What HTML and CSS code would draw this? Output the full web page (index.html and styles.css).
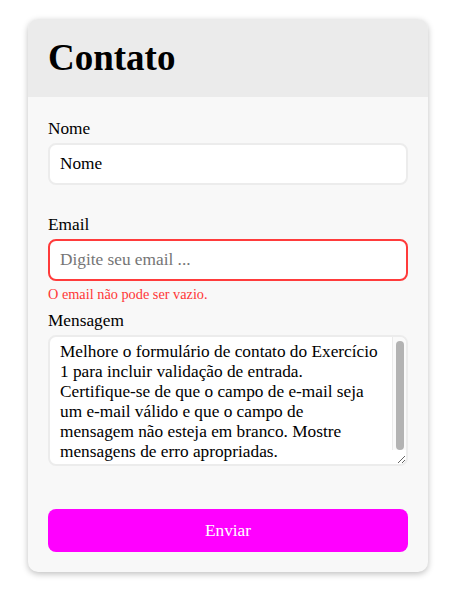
FILE: index.html
```html
<!DOCTYPE html>
<html lang="pt">
<head>
<meta charset="utf-8">
<title>Contato</title>
<link rel="stylesheet" href="styles.css">
</head>
<body>
<div class="page">
  <form class="card" novalidate>
    <header class="card-header">
      <h1 class="title">Contato</h1>
    </header>
    <div class="card-body">
      <div class="field">
        <label class="label" for="nome">Nome</label>
        <input class="input" id="nome" type="text" value="Nome">
        <span class="error"></span>
      </div>
      <div class="field">
        <label class="label" for="email">Email</label>
        <input class="input input-invalid" id="email" type="email" placeholder="Digite seu email ...">
        <span class="error">O email não pode ser vazio.</span>
      </div>
      <div class="field">
        <label class="label" for="mensagem">Mensagem</label>
        <div class="textarea-wrap">
          <textarea class="input textarea" id="mensagem">Melhore o formulário de contato do Exercício 1 para incluir validação de entrada. Certifique-se de que o campo de e-mail seja um e-mail válido e que o campo de mensagem não esteja em branco. Mostre mensagens de erro apropriadas.</textarea>
          <div class="scrollbar" aria-hidden="true"><div class="scrollbar-thumb"></div></div>
        </div>
        <span class="error"></span>
      </div>
      <button class="button" type="button">Enviar</button>
    </div>
  </form>
</div>
</body>
</html>
```
FILE: styles.css
```css
html, body {
  margin: 0;
  padding: 0;
  background: #ffffff;
}

body {
  font-family: "Liberation Serif", "DejaVu Serif", serif;
  color: #000;
}

.page {
  padding: 19px 22px 24px 28px;
}

.card {
  width: 400px;
  background: #f8f8f8;
  border-radius: 10px;
  box-shadow: 0 2px 6px rgba(0, 0, 0, 0.25);
  overflow: hidden;
}

.card-header {
  background: #ebebeb;
  padding: 20px;
}

.title {
  margin: 0;
  font-size: 37px;
  line-height: 38px;
  font-weight: bold;
}

.card-body {
  padding: 23px 20px 20px;
  display: flex;
  flex-direction: column;
}

.field {
  display: flex;
  flex-direction: column;
  margin-bottom: 10px;
}

.label {
  font-size: 17.3px;
  line-height: 18px;
  margin-bottom: 5px;
}

.input {
  box-sizing: border-box;
  width: 100%;
  height: 42px;
  margin: 0;
  padding: 0 10px;
  border: 2px solid #ececec;
  border-radius: 8px;
  background: #fff;
  font-family: inherit;
  font-size: 17.3px;
  color: #000;
  outline: none;
}

.input::placeholder {
  color: #757575;
}

.input-invalid {
  border-color: #ff3b3b;
}

.textarea-wrap {
  position: relative;
}

.textarea {
  display: block;
  height: 131px;
  padding: 5px 25px 6px 10px;
  line-height: 20px;
  overflow: hidden;
  resize: both;
}

.scrollbar {
  position: absolute;
  top: 2px;
  right: 2px;
  bottom: 16px;
  width: 13px;
  border-left: 1px solid #ebebeb;
  background: #fafafa;
  border-top-right-radius: 6px;
  pointer-events: none;
}

.scrollbar-thumb {
  position: absolute;
  top: 4px;
  bottom: 0;
  left: 3px;
  width: 8px;
  border-radius: 4px;
  background: #b3b3b3;
}

.error {
  margin-top: 5px;
  min-height: 16px;
  font-size: 14.3px;
  line-height: 16px;
  color: #ff3636;
}

.button {
  margin-top: 12px;
  height: 43px;
  border: none;
  border-radius: 8px;
  background: #ff00ff;
  color: #fff;
  font-family: inherit;
  font-size: 17.3px;
  cursor: pointer;
}
```
